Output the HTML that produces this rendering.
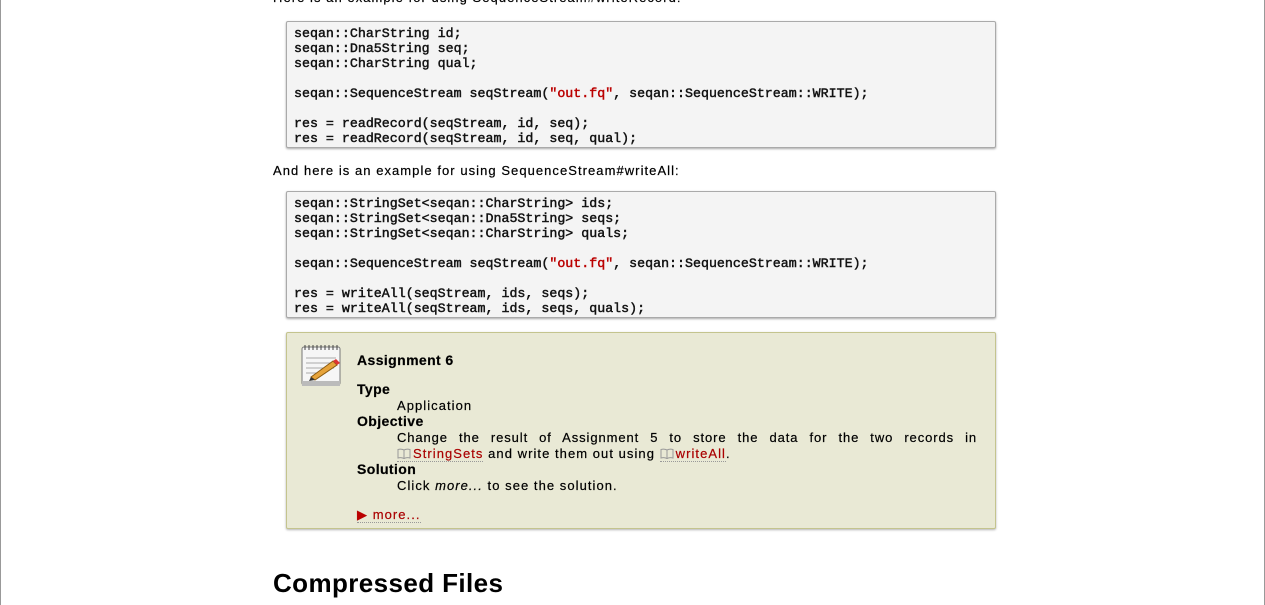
<!DOCTYPE html>
<html><head><style>
body{margin:0;width:1265px;height:605px;overflow:hidden;background:#fff;font-family:"Liberation Sans",sans-serif;font-size:13px;letter-spacing:1.05px;color:#000;position:relative;-webkit-text-stroke:0.2px #000}
.frame{position:absolute;top:0;bottom:0;width:1px;background:#999;-webkit-text-stroke:0}
.p{position:absolute;left:273px;white-space:nowrap}
.code{position:absolute;left:286px;width:708px;height:125px;background:#f4f4f4;border:1px solid #aaa;box-shadow:0 1px 2px rgba(0,0,0,.35);border-radius:2px}
.code pre{margin:0;position:absolute;left:7px;top:4px;font-family:"Liberation Mono",monospace;font-size:13.3px;line-height:15px;color:#111;letter-spacing:0;-webkit-text-stroke:0.45px #111}
.s{color:#b00;-webkit-text-stroke-color:#b00}
.box{position:absolute;left:286px;top:332px;width:708px;height:195px;background:#e9e9d5;border:1px solid #c4c48e;box-shadow:0 1px 2px rgba(0,0,0,.3);border-radius:2px}
.b{position:absolute;font-weight:bold;font-size:14px;white-space:nowrap;letter-spacing:0.4px}
.t{position:absolute;font-size:13px;white-space:nowrap}
a{color:#a00;text-decoration:none;border-bottom:1px dotted #999;-webkit-text-stroke-color:#a00}
.bk{display:inline-block;vertical-align:-1px;margin-right:2px}
h2{position:absolute;left:273px;top:568px;margin:0;font-size:26px;font-weight:bold;letter-spacing:0.4px;-webkit-text-stroke:0}
</style></head><body>
<div class="frame" style="left:0"></div><div class="frame" style="right:0"></div>
<div class="p" style="top:-10px">Here is an example for using SequenceStream#writeRecord:</div>
<div class="code" style="top:21px"><pre>seqan::CharString id;
seqan::Dna5String seq;
seqan::CharString qual;

seqan::SequenceStream seqStream(<span class="s">"out.fq"</span>, seqan::SequenceStream::WRITE);

res = readRecord(seqStream, id, seq);
res = readRecord(seqStream, id, seq, qual);</pre></div>
<div class="p" style="top:163px">And here is an example for using SequenceStream#writeAll:</div>
<div class="code" style="top:191px"><pre>seqan::StringSet&lt;seqan::CharString&gt; ids;
seqan::StringSet&lt;seqan::Dna5String&gt; seqs;
seqan::StringSet&lt;seqan::CharString&gt; quals;

seqan::SequenceStream seqStream(<span class="s">"out.fq"</span>, seqan::SequenceStream::WRITE);

res = writeAll(seqStream, ids, seqs);
res = writeAll(seqStream, ids, seqs, quals);</pre></div>
<div class="box">
<svg style="position:absolute;left:12px;top:10px" width="48" height="48" viewBox="0 0 48 48">
<rect x="3" y="4" width="38" height="38" rx="2" fill="#f6f6f6" stroke="#777"/>
<rect x="3" y="38" width="38" height="5" fill="#bbb"/>
<g stroke="#444" stroke-width="1"><path d="M6 2v5M10 2v5M14 2v5M18 2v5M22 2v5M26 2v5M30 2v5M34 2v5M38 2v5"/></g>
<g stroke="#aaa"><path d="M7 15h30M7 20h30M7 25h28M7 30h20"/></g>
<path d="M12 34L34 18l4 4-22 15z" fill="#e6a33a" stroke="#8a5a10"/>
<path d="M34 18l3-2 4 4-3 2z" fill="#d33"/>
<path d="M12 34l-2 4 6-1z" fill="#333"/>
</svg>
<div class="b" style="left:70px;top:19px">Assignment 6</div>
<div class="b" style="left:70px;top:48px">Type</div>
<div class="t" style="left:110px;top:65px">Application</div>
<div class="b" style="left:70px;top:80px">Objective</div>
<div class="t" style="left:110px;top:97px;width:580px;text-align:justify;text-align-last:justify;letter-spacing:0.9px">Change the result of Assignment 5 to store the data for the two records in</div>
<div class="t" style="left:110px;top:113px"><a><svg class="bk" width="14" height="11" viewBox="0 0 14 11"><path d="M7 2C5 1 3 1 1 1.5V10C3 9.5 5 9.5 7 10.5C9 9.5 11 9.5 13 10V1.5C11 1 9 1 7 2ZM7 2V10.5" fill="none" stroke="#999"/></svg>StringSets</a> and write them out using <a><svg class="bk" width="14" height="11" viewBox="0 0 14 11"><path d="M7 2C5 1 3 1 1 1.5V10C3 9.5 5 9.5 7 10.5C9 9.5 11 9.5 13 10V1.5C11 1 9 1 7 2ZM7 2V10.5" fill="none" stroke="#999"/></svg>writeAll</a>.</div>
<div class="b" style="left:70px;top:128px">Solution</div>
<div class="t" style="left:110px;top:145px">Click <i>more...</i> to see the solution.</div>
<div class="t" style="left:70px;top:174px"><a><span style="color:#b00">&#9654;</span> more...</a></div>
</div>
<h2>Compressed Files</h2>
</body></html>
